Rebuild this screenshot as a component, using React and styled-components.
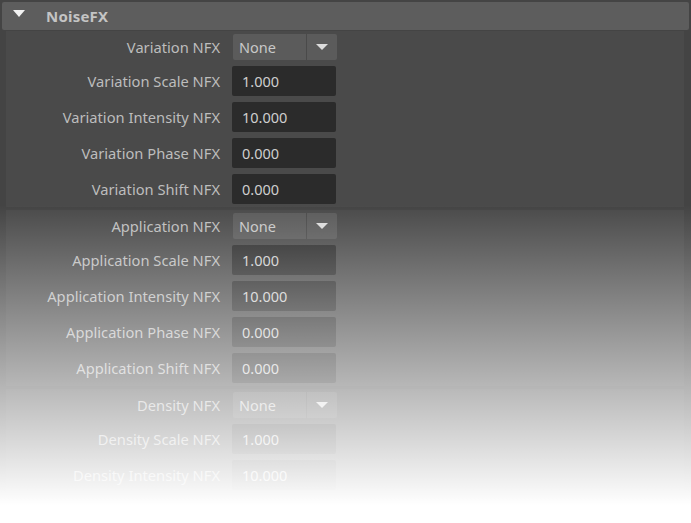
import styled, { createGlobalStyle } from 'styled-components';

const GlobalStyle = createGlobalStyle`
  html, body {
    margin: 0;
    padding: 0;
    background: #444444;
  }
  body {
    font-family: "Noto Sans", "Open Sans", sans-serif;
  }
`;

const Page = styled.div`
  position: relative;
  width: 691px;
  height: 523px;
  overflow: hidden;
  background: #444444;
  padding-top: 2px;
  box-sizing: border-box;
`;

const Header = styled.div`
  display: flex;
  align-items: center;
  height: 28px;
  margin: 0 2px 1px 2px;
  background: #5d5d5d;
  border-radius: 2px;
`;

const HeaderArrow = styled.span`
  width: 0;
  height: 0;
  margin-left: 11px;
  margin-right: 21px;
  margin-top: -6px;
  border-left: 6px solid transparent;
  border-right: 6px solid transparent;
  border-top: 7px solid #f2f2f2;
`;

const HeaderTitle = styled.span`
  font-size: 15px;
  font-weight: 700;
  color: #c4c4c4;
  letter-spacing: 0.2px;
`;

const Groups = styled.div`
  display: flex;
  flex-direction: column;
  gap: 3px;
  margin: 0 7px 0 6px;
`;

const Group = styled.div`
  display: flex;
  flex-direction: column;
  gap: 6px;
  padding: 3px 0;
  background: #4a4a4a;
`;

const Row = styled.div`
  display: flex;
  align-items: center;
  height: ${p => (p.$menu ? 26 : 30)}px;
`;

const Label = styled.div`
  width: 214px;
  text-align: right;
  font-size: 14.7px;
  color: #bdbdbd;
  white-space: nowrap;
`;

const Field = styled.div`
  display: flex;
  align-items: center;
  box-sizing: border-box;
  width: 104px;
  height: 30px;
  margin-left: 12px;
  padding-left: 10px;
  padding-bottom: 1px;
  background: #2b2b2b;
  border-radius: 2px;
  font-size: 14.5px;
  color: #cfcfcf;
`;

const Menu = styled.div`
  display: flex;
  gap: 1px;
  height: 26px;
  margin-left: 13px;
`;

const MenuValue = styled.div`
  display: flex;
  align-items: center;
  box-sizing: border-box;
  width: 73px;
  padding-left: 6px;
  background: #5b5b5b;
  border-radius: 2px 0 0 2px;
  font-size: 14.5px;
  color: #c8c8c8;
`;

const MenuButton = styled.div`
  display: flex;
  align-items: center;
  justify-content: center;
  width: 30px;
  background: #5b5b5b;
  border-radius: 0 2px 2px 0;
`;

const MenuArrow = styled.span`
  width: 0;
  height: 0;
  border-left: 6.5px solid transparent;
  border-right: 6.5px solid transparent;
  border-top: 6px solid #dcdcdc;
`;

// fade-out over the lower half of the editor
const Fade = styled.div`
  position: absolute;
  inset: 0;
  pointer-events: none;
  background: linear-gradient(
    to bottom,
    rgba(255, 255, 255, 0) 205px,
    rgba(255, 255, 255, 1) 505px
  );
`;

const groups = [
  { name: 'Variation', fields: [['Scale', '1.000'], ['Intensity', '10.000'], ['Phase', '0.000'], ['Shift', '0.000']] },
  { name: 'Application', fields: [['Scale', '1.000'], ['Intensity', '10.000'], ['Phase', '0.000'], ['Shift', '0.000']] },
  { name: 'Density', fields: [['Scale', '1.000'], ['Intensity', '10.000']] },
];

const App = () => {
  return (
    <Page>
      <GlobalStyle />
      <Header>
        <HeaderArrow />
        <HeaderTitle>NoiseFX</HeaderTitle>
      </Header>
      <Groups>
        {groups.map(g => (
          <Group key={g.name}>
            <Row $menu>
              <Label>{g.name} NFX</Label>
              <Menu>
                <MenuValue>None</MenuValue>
                <MenuButton>
                  <MenuArrow />
                </MenuButton>
              </Menu>
            </Row>
            {g.fields.map(([attr, value]) => (
              <Row key={attr}>
                <Label>
                  {g.name} {attr} NFX
                </Label>
                <Field>{value}</Field>
              </Row>
            ))}
          </Group>
        ))}
      </Groups>
      <Fade />
    </Page>
  );
};

export default App;
